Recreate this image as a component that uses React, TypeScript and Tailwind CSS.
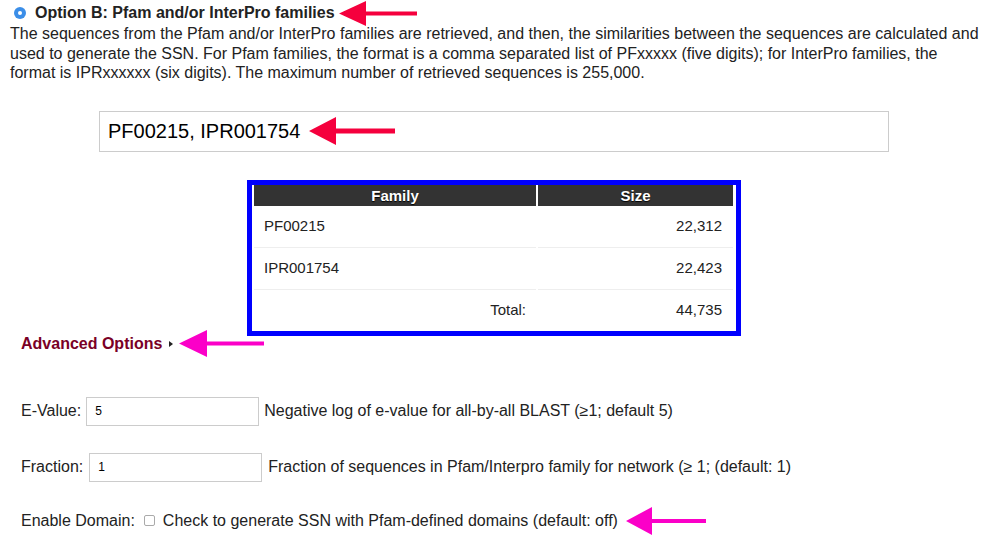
import React from 'react';

type ArrowProps = { w: number; h: number; head: number; t: number; color: string; className?: string };

// annotation arrow pointing left
const Arrow: React.FC<ArrowProps> = ({ w, h, head, t, color, className }) => {
  const m = h / 2;
  const pts = `0,${m} ${head},0 ${head},${m - t / 2} ${w},${m - t / 2} ${w},${m + t / 2} ${head},${m + t / 2} ${head},${h}`;
  return (
    <svg width={w} height={h} viewBox={`0 0 ${w} ${h}`} className={className}>
      <polygon points={pts} fill={color} />
    </svg>
  );
};

const rows = [
  { family: 'PF00215', size: '22,312' },
  { family: 'IPR001754', size: '22,423' },
];

export default function App() {
  return (
    <div className="w-[992px] h-[544px] overflow-hidden bg-white font-['Liberation_Sans',Arial,sans-serif] text-[16px] text-[#222]">
      {/* option header */}
      <div className="flex items-center h-[24px] pl-[14px] pt-[2px]">
        <span className="w-[12px] h-[12px] rounded-full bg-[#3b8ee8] flex items-center justify-center">
          <span className="w-[4px] h-[4px] rounded-full bg-white" />
        </span>
        <span className="ml-[9px] text-[16px] font-bold text-[#222]">Option B: Pfam and/or InterPro families</span>
        <Arrow w={78} h={25} head={27} t={4} color="#f5003d" className="ml-[4px]" />
      </div>
      <p className="px-[10px] leading-[19.5px]">
        The sequences from the Pfam and/or InterPro families are retrieved, and then, the similarities between the sequences are calculated and used to generate the SSN. For Pfam families, the format is a comma separated list of PFxxxxx (five digits); for InterPro families, the format is IPRxxxxxx (six digits). The maximum number of retrieved sequences is 255,000.
      </p>

      {/* families input */}
      <div className="ml-[99px] mt-[28px] w-[790px] h-[41px] border border-[#ccc] flex items-center pl-[8px]">
        <span className="text-[20px] text-black">PF00215, IPR001754</span>
        <Arrow w={86} h={28} head={27} t={5} color="#f5003d" className="ml-[9px]" />
      </div>

      {/* family table */}
      <div className="ml-[247px] mt-[28px] w-[494px] h-[156px] border-[5px] border-[#0000ff] px-[2px] text-[15px]">
        <div className="grid grid-cols-[282px_195px] gap-x-[2px]">
          <div className="h-[21px] bg-[#333] text-white font-bold text-center leading-[21px] [text-shadow:0_1px_1px_#000]">Family</div>
          <div className="h-[21px] bg-[#333] text-white font-bold text-center leading-[21px] [text-shadow:0_1px_1px_#000]">Size</div>
          {rows.map((r) => (
            <React.Fragment key={r.family}>
              <div className="h-[42px] border-b border-[#eee] flex items-center pl-[10px]">{r.family}</div>
              <div className="h-[42px] border-b border-[#eee] flex items-center justify-end pr-[11px]">{r.size}</div>
            </React.Fragment>
          ))}
          <div className="h-[41px] flex items-center justify-end pr-[10px]">Total:</div>
          <div className="h-[41px] flex items-center justify-end pr-[11px]">44,735</div>
        </div>
      </div>

      {/* advanced options */}
      <div className="flex items-center h-[28px] mt-[-6px] pl-[21px]">
        <span className="font-bold text-[#7a0026]">Advanced Options</span>
        <span className="ml-[7px] w-0 h-0 border-y-[3px] border-y-transparent border-l-[4px] border-l-[#222]" />
        <Arrow w={85} h={27} head={28} t={4} color="#fb00c8" className="ml-[6px]" />
      </div>

      {/* e-value */}
      <div className="flex items-center mt-[39px] pl-[21px]">
        <span>E-Value:</span>
        <div className="ml-[5px] w-[173px] h-[29px] border border-[#ccc] flex items-center pl-[8px] text-[12px] text-black">5</div>
        <span className="ml-[5px]">Negative log of e-value for all-by-all BLAST (≥1; default 5)</span>
      </div>

      {/* fraction */}
      <div className="flex items-center mt-[27px] pl-[21px]">
        <span>Fraction:</span>
        <div className="ml-[6px] w-[173px] h-[29px] border border-[#ccc] flex items-center pl-[8px] text-[12px] text-black">1</div>
        <span className="ml-[6px]">Fraction of sequences in Pfam/Interpro family for network (≥ 1; (default: 1)</span>
      </div>

      {/* domain */}
      <div className="flex items-center h-[28px] mt-[25px] pl-[21px]">
        <span>Enable Domain:</span>
        <span className="ml-[9px] w-[11px] h-[11px] rounded-[2px] border border-[#aaa] bg-white" />
        <span className="ml-[8px]">Check to generate SSN with Pfam-defined domains (default: off)</span>
        <Arrow w={80} h={28} head={26} t={4} color="#fb00c8" className="ml-[8px]" />
      </div>
    </div>
  );
}
